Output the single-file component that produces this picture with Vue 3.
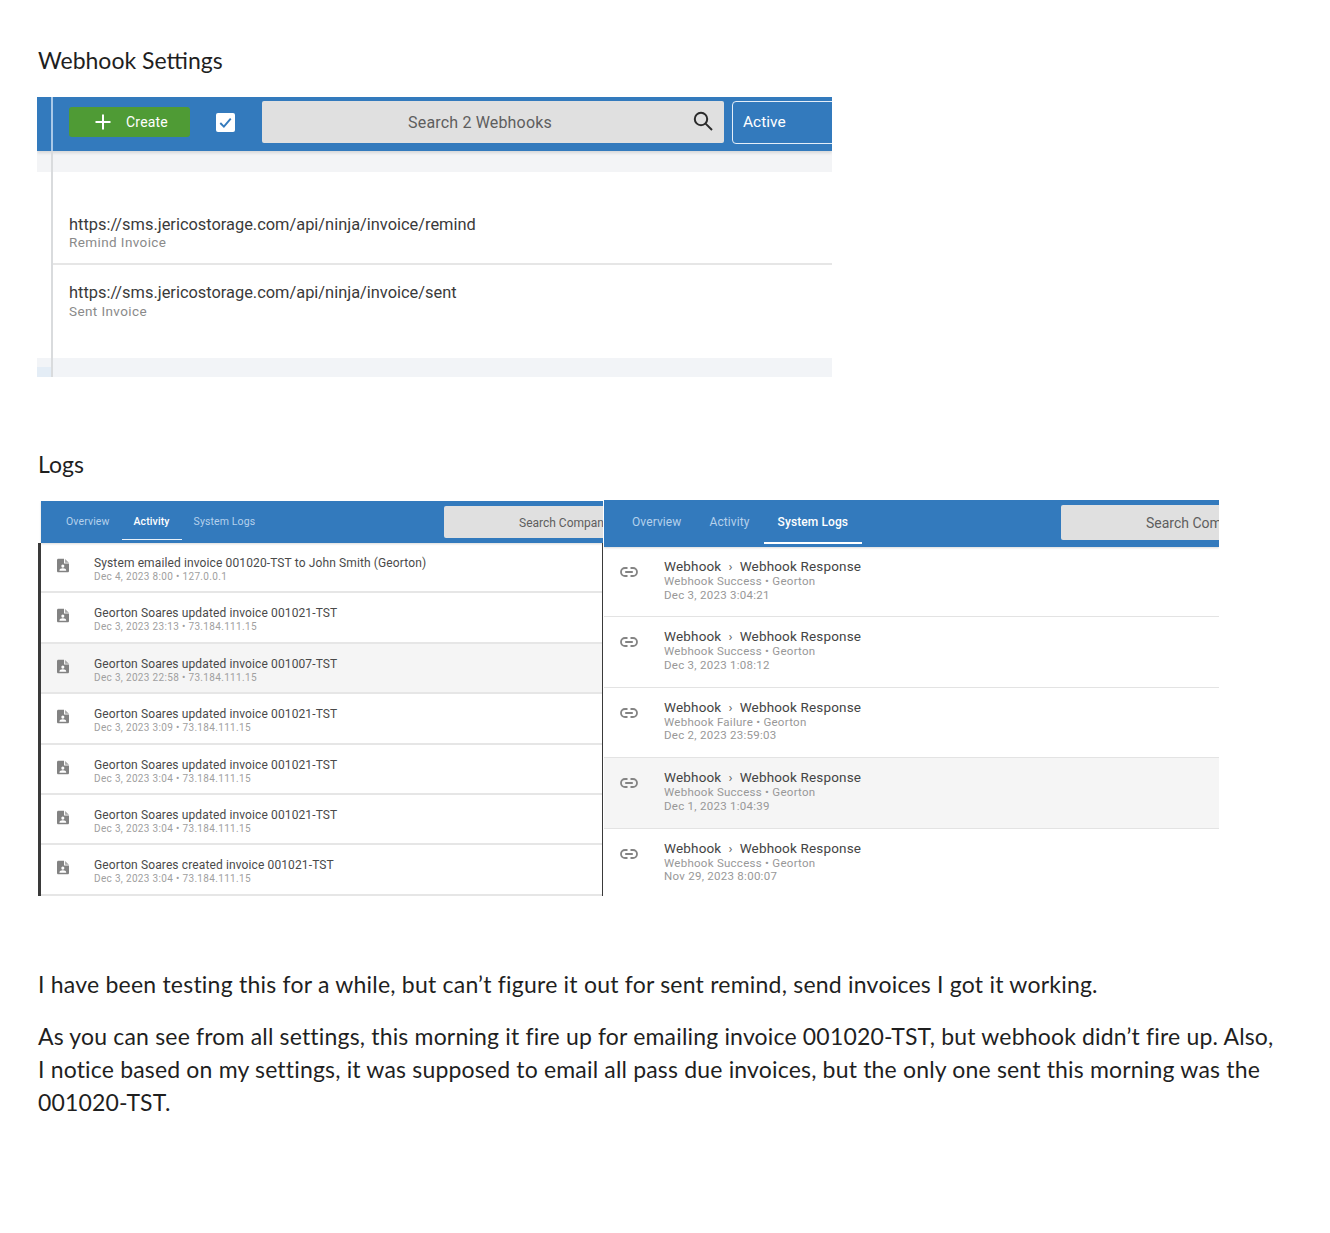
<script setup>
const webhooks = [
  { url: 'https://sms.jericostorage.com/api/ninja/invoice/remind', name: 'Remind Invoice' },
  { url: 'https://sms.jericostorage.com/api/ninja/invoice/sent', name: 'Sent Invoice' },
]
const activity = [
  { title: 'System emailed invoice 001020-TST to John Smith (Georton)', sub: 'Dec 4, 2023 8:00 • 127.0.0.1' },
  { title: 'Georton Soares updated invoice 001021-TST', sub: 'Dec 3, 2023 23:13 • 73.184.111.15' },
  { title: 'Georton Soares updated invoice 001007-TST', sub: 'Dec 3, 2023 22:58 • 73.184.111.15', hover: true },
  { title: 'Georton Soares updated invoice 001021-TST', sub: 'Dec 3, 2023 3:09 • 73.184.111.15' },
  { title: 'Georton Soares updated invoice 001021-TST', sub: 'Dec 3, 2023 3:04 • 73.184.111.15' },
  { title: 'Georton Soares updated invoice 001021-TST', sub: 'Dec 3, 2023 3:04 • 73.184.111.15' },
  { title: 'Georton Soares created invoice 001021-TST', sub: 'Dec 3, 2023 3:04 • 73.184.111.15' },
]
const logs = [
  { sub: 'Webhook Success • Georton', date: 'Dec 3, 2023 3:04:21' },
  { sub: 'Webhook Success • Georton', date: 'Dec 3, 2023 1:08:12' },
  { sub: 'Webhook Failure • Georton', date: 'Dec 2, 2023 23:59:03' },
  { sub: 'Webhook Success • Georton', date: 'Dec 1, 2023 1:04:39', hover: true },
  { sub: 'Webhook Success • Georton', date: 'Nov 29, 2023 8:00:07' },
]
</script>

<template>
  <main class="page">
    <h2 class="heading">Webhook Settings</h2>

    <section class="settings">
      <header class="settings-bar">
        <button class="create">
          <svg class="plus" viewBox="0 0 16 16"><path d="M8 0.5v15M0.5 8h15" /></svg>
          <span>Create</span>
        </button>
        <span class="check">
          <svg viewBox="0 0 20 20"><path d="M4.5 10.5l3.8 3.8 7.2-8.3" /></svg>
        </span>
        <div class="search-big">
          <span>Search 2 Webhooks</span>
          <svg viewBox="0 0 24 24"><circle cx="10" cy="10" r="6.2" /><path d="M14.6 14.6l6.4 6.4" /></svg>
        </div>
        <div class="active">Active</div>
      </header>
      <div class="band-top"></div>
      <ul class="hooks">
        <li v-for="hook in webhooks" :key="hook.url" class="hook">
          <div class="hook-url">{{ hook.url }}</div>
          <div class="hook-name">{{ hook.name }}</div>
        </li>
      </ul>
      <div class="band-bottom"></div>
    </section>

    <h2 class="heading logs-heading">Logs</h2>

    <section class="logs">
      <div class="panel-left">
        <header class="bar-left">
          <nav class="tabs-left">
            <span class="tab-l">Overview</span>
            <span class="tab-l on">Activity</span>
            <span class="tab-l">System Logs</span>
          </nav>
          <div class="search-left">Search Compan</div>
        </header>
        <ul class="activity">
          <li v-for="(row, i) in activity" :key="i" class="act-row" :class="{ hover: row.hover }">
            <svg class="doc" viewBox="0 0 14 16">
              <path d="M1.6 0h6.600v5.800H14v8.600c0 .9-.7 1.600-1.600 1.600H1.600C.7 16 0 15.300 0 14.400V1.600C0 .7.700 0 1.600 0z" fill="#828282" />
              <path d="M9.400 0.300L14 4.800H9.400z" fill="#a8a8a8" />
              <circle cx="6.800" cy="8.700" r="1.800" fill="#fff" />
              <path d="M2.800 14c0-1.800 1.800-2.700 4-2.700s4 .9 4 2.700z" fill="#fff" />
            </svg>
            <div>
              <div class="act-title">{{ row.title }}</div>
              <div class="act-sub">{{ row.sub }}</div>
            </div>
          </li>
        </ul>
      </div>

      <div class="panel-right">
        <header class="bar-right">
          <nav class="tabs-right">
            <span class="tab-r">Overview</span>
            <span class="tab-r">Activity</span>
            <span class="tab-r on">System Logs</span>
          </nav>
          <div class="search-right">Search Company</div>
        </header>
        <ul class="syslogs">
          <li v-for="(row, i) in logs" :key="i" class="log-row" :class="{ hover: row.hover }">
            <svg class="link" viewBox="0 0 18 10">
              <path d="M7.500 1H5a4 4 0 0 0 0 8h2.500M10.500 1H13a4 4 0 0 1 0 8h-2.500M5.200 5h7.600" />
            </svg>
            <div>
              <div class="log-title">Webhook<span class="sep">›</span>Webhook Response</div>
              <div class="log-sub first">{{ row.sub }}</div>
              <div class="log-sub">{{ row.date }}</div>
            </div>
          </li>
        </ul>
      </div>
    </section>

    <p class="para first">I have been testing this for a while, but can’t figure it out for sent remind, send invoices I got it working.</p>
    <p class="para second">As you can see from all settings, this morning it fire up for emailing invoice 001020-TST, but webhook didn’t fire up. Also,<br />I notice based on my settings, it was supposed to email all pass due invoices, but the only one sent this morning was the<br />001020-TST.</p>
  </main>
</template>

<style>
html, body { background: #fff; }
</style>

<style scoped>
.page {
  box-sizing: border-box;
  width: 1330px;
  min-height: 1233px;
  padding: 44px 0 0 38px;
  font-family: "Lato", "Open Sans", sans-serif;
  color: #1f1f1f;
  overflow: hidden;
}
ul { list-style: none; margin: 0; padding: 0; }
.heading {
  margin: 0;
  font-size: 23px;
  font-weight: 400;
  line-height: 33px;
}
.logs-heading { margin-top: 71px; }

/* Webhook settings screenshot */
.settings {
  position: relative;
  width: 795px;
  height: 280px;
  margin: 20px 0 0 -1px;
  display: flex;
  flex-direction: column;
  font-family: "Roboto", sans-serif;
  overflow: hidden;
}
.settings::after {
  content: "";
  position: absolute;
  z-index: 2;
  left: 14px;
  top: 0;
  bottom: 0;
  width: 2px;
  background: linear-gradient(#a9c9e8 0 54px, #d9dbdd 54px);
}
.settings::before {
  content: "";
  position: absolute;
  left: 0;
  bottom: 0;
  width: 14px;
  height: 10px;
  background: #e4edf6;
}
.settings-bar {
  box-sizing: border-box;
  height: 54px;
  flex: none;
  background: #337abd;
  box-shadow: 0 2px 3px rgba(0, 0, 0, .12);
  display: flex;
  align-items: center;
  padding: 0 0 4px 32px;
  position: relative;
  z-index: 1;
}
.create {
  flex: none;
  width: 121px;
  height: 30px;
  border: 0;
  border-radius: 3px;
  background: #4f9b35;
  color: #fff;
  font: 400 14px "Roboto", sans-serif;
  letter-spacing: .2px;
  display: flex;
  align-items: center;
  gap: 15px;
  padding: 0 0 0 26px;
}
.plus { width: 16px; height: 16px; }
.plus path { fill: none; stroke: #fff; stroke-width: 2; }
.check {
  flex: none;
  width: 19px;
  height: 19px;
  margin-left: 26px;
  background: #fff;
  border-radius: 2px;
  display: block;
}
.check svg { display: block; width: 19px; height: 19px; }
.check path { fill: none; stroke: #337abd; stroke-width: 2; }
.search-big {
  box-sizing: border-box;
  flex: none;
  position: relative;
  width: 462px;
  height: 42px;
  margin-left: 27px;
  padding-right: 26px;
  background: #e0e0e0;
  border-radius: 2px;
  display: flex;
  align-items: center;
  justify-content: center;
  color: #5e5e5e;
  font-size: 16px;
  letter-spacing: .17px;
}
.search-big svg {
  position: absolute;
  right: 9px;
  top: 8px;
  width: 24px;
  height: 24px;
  fill: none;
  stroke: #2b2b2b;
  stroke-width: 2;
}
.active {
  box-sizing: border-box;
  flex: none;
  width: 120px;
  height: 43px;
  margin-left: 8px;
  border: 1px solid #e4eef8;
  border-radius: 4px;
  color: #fff;
  font-size: 15.500px;
  line-height: 41px;
  padding-left: 10px;
}
.band-top { height: 21px; flex: none; background: #f3f4f6; }
.hooks { flex: 1; padding: 26px 0 0 15px; }
.hook { padding: 17px 0 0 17px; }
.hook + .hook { border-top: 2px solid #e6e6e6; margin-top: 14px; padding-top: 18px; }
.hook-url { font-size: 16.400px; line-height: 20px; color: #3a3a3a; }
.hook-name { font-size: 13.500px; line-height: 14px; color: #8a8a8a; letter-spacing: .4px; }
.hook + .hook .hook-name { margin-top: 1px; }
.band-bottom { height: 19px; flex: none; background: #f2f4f7; }

/* Logs screenshots */
.logs {
  display: flex;
  align-items: flex-start;
  margin-top: 19px;
  height: 396px;
  font-family: "Roboto", sans-serif;
}
.panel-left {
  width: 565px;
  height: 395px;
  margin-top: 1px;
  flex: none;
  overflow: hidden;
  display: flex;
  flex-direction: column;
}
.bar-left {
  height: 42px;
  flex: none;
  margin-left: 3px;
  background: #337abd;
  display: flex;
  align-items: stretch;
  justify-content: space-between;
  box-shadow: 0 1px 2px rgba(0, 0, 0, .15);
  position: relative;
  z-index: 1;
}
.tabs-left { display: flex; padding-left: 13px; }
.tab-l {
  box-sizing: border-box;
  padding: 0 12px;
  height: 39px;
  line-height: 42px;
  font-size: 10.500px;
  letter-spacing: .12px;
  color: #b5d1ec;
}
.tab-l.on { color: #fff; font-weight: 500; border-bottom: 1px solid #e8f1fa; width: 60px; text-align: center; padding: 0; }
.search-left {
  box-sizing: border-box;
  width: 159px;
  height: 32px;
  margin-top: 5px;
  background: #e0e0e0;
  color: #5e5e5e;
  font-size: 12px;
  line-height: 34px;
  padding-left: 75px;
  white-space: nowrap;
  overflow: hidden;
  border-radius: 2px 0 0 2px;
}
.activity {
  flex: 1;
  border-left: 3px solid #3a3a3a;
  border-right: 1px solid #3a3a3a;
}
.act-row {
  box-sizing: border-box;
  height: 50.400px;
  display: flex;
  align-items: flex-start;
  padding: 13px 0 0 16px;
  gap: 25px;
  border-bottom: 2px solid #e6e6e6;
}
.act-row.hover { background: #f5f5f5; }
.doc { width: 12px; height: 15px; flex: none; margin-top: 2px; }
.act-title { font-size: 12px; line-height: 14px; color: #4a4a4a; letter-spacing: .12px; white-space: nowrap; }
.act-sub { font-size: 10px; line-height: 13px; color: #a0a0a0; letter-spacing: .33px; white-space: nowrap; }

.panel-right {
  width: 615px;
  flex: none;
  margin-left: 1px;
  overflow: hidden;
}
.bar-right {
  height: 47px;
  background: #337abd;
  display: flex;
  justify-content: space-between;
  box-shadow: 0 1px 2px rgba(0, 0, 0, .15);
  position: relative;
}
.tabs-right { display: flex; padding-left: 14px; }
.tab-r {
  box-sizing: border-box;
  padding: 0 14px;
  height: 44px;
  line-height: 45px;
  font-size: 12px;
  letter-spacing: .1px;
  color: #b5d1ec;
}
.tab-r.on { color: #fff; font-weight: 500; border-bottom: 2px solid #fff; }
.search-right {
  box-sizing: border-box;
  width: 158px;
  height: 35px;
  margin-top: 5px;
  background: #e0e0e0;
  color: #5e5e5e;
  font-size: 14px;
  line-height: 37px;
  padding-left: 85px;
  white-space: nowrap;
  overflow: hidden;
  border-radius: 2px 0 0 2px;
}
.log-row {
  box-sizing: border-box;
  height: 70.400px;
  display: flex;
  align-items: flex-start;
  gap: 26px;
  padding: 12px 0 0 16px;
  border-bottom: 1px solid #e3e3e3;
}
.log-row:last-child { border-bottom: 0; }
.log-row.hover { background: #f5f5f5; }
.link { width: 18px; height: 10px; flex: none; margin-top: 8px; fill: none; stroke: #848484; stroke-width: 1.800; }
.log-title { font-size: 13.500px; line-height: 14px; color: #444; letter-spacing: .17px; white-space: nowrap; }
.sep { margin: 0 7px; color: #666; }
.log-sub { font-size: 11.500px; line-height: 13.500px; color: #989898; letter-spacing: .27px; white-space: nowrap; }
.log-sub.first { margin-top: 2px; }

.para {
  margin: 19px 0 0;
  font-size: 23px;
  line-height: 33px;
  letter-spacing: .2px;
  white-space: nowrap;
}
.para.first { margin-top: 72px; letter-spacing: .22px; }
.para.second { letter-spacing: .175px; }
</style>
